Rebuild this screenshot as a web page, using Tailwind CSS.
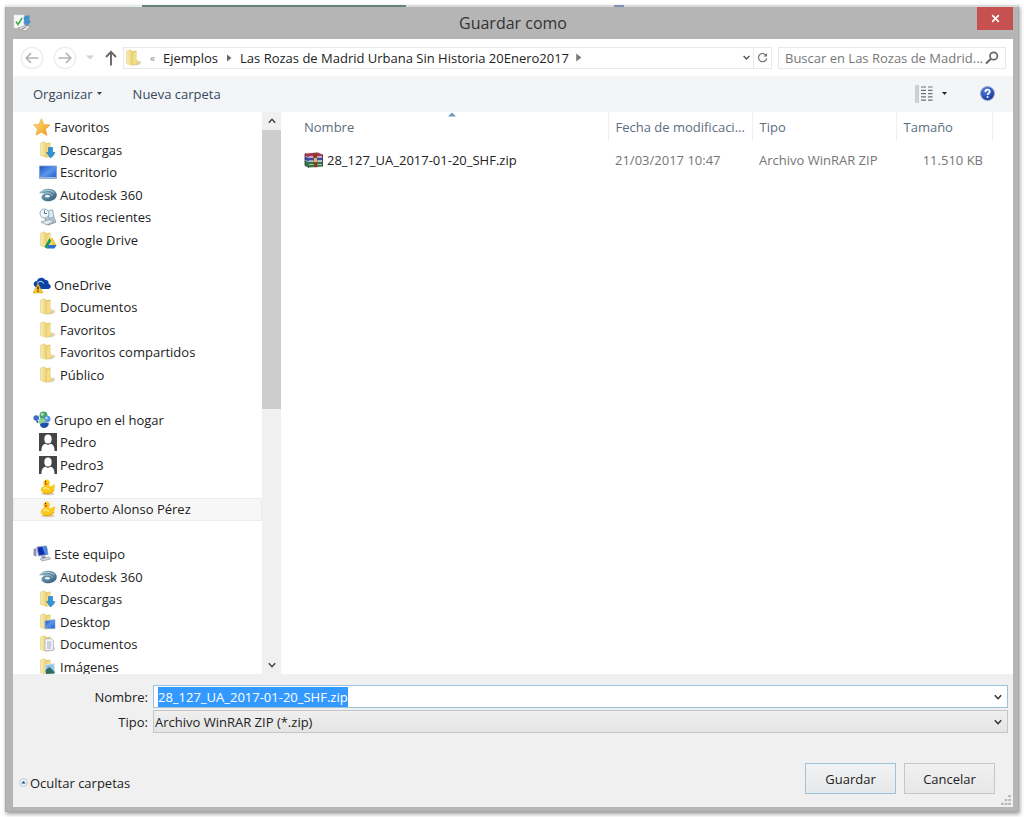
<!DOCTYPE html>
<html lang="es">
<head>
<meta charset="utf-8">
<meta name="viewport" content="width=device-width, initial-scale=1">
<title>Guardar como</title>
<script src="https://cdn.jsdelivr.net/npm/@tailwindcss/browser@4"></script>
</head>
<body class="bg-white font-['Open_Sans','Noto_Sans',sans-serif] text-[13px] leading-5 text-[#333]">
<svg class="absolute size-0" aria-hidden="true">
  <defs>
    <linearGradient id="gf" x1="0" x2="1"><stop offset="0" stop-color="#f9eeb4"/><stop offset="1" stop-color="#e9ce6c"/></linearGradient>
    <linearGradient id="gb" x1="0" y1="0" x2="1" y2="1"><stop offset="0" stop-color="#1c4fc4"/><stop offset=".5" stop-color="#5b95ea"/><stop offset="1" stop-color="#1f5bd0"/></linearGradient>
    <linearGradient id="gs" x1="0" y1="0" x2="1" y2="1"><stop offset="0" stop-color="#ffe680"/><stop offset="1" stop-color="#ee9316"/></linearGradient>
    <linearGradient id="ga" x1="0" y1="0" x2="1" y2="1"><stop offset="0" stop-color="#8fb9cc"/><stop offset="1" stop-color="#2f5878"/></linearGradient>
    <radialGradient id="gh" cx=".4" cy=".3" r=".8"><stop offset="0" stop-color="#5b86e6"/><stop offset="1" stop-color="#0a2590"/></radialGradient>
    <symbol id="folder" viewBox="0 0 18 18">
      <path d="M10 14l5-2.500 1.500 2.500-3 2.200-5 .3z" fill="#c4c8cc" opacity=".7"/>
      <path d="M6 2.500L11.500 1.500V11L14 12.500 13.500 15 7 16.500z" fill="#e6cb6d"/>
      <path d="M1.500 2L5.500.800 7.500 2.500 8 16.500 1.500 14.500z" fill="url(#gf)" stroke="#e2cd80" stroke-width=".6"/>
      <path d="M8 4l3-1v8.500l2.500 1.500L8 16z" fill="#f3dd88"/>
    </symbol>
    <symbol id="down" viewBox="0 0 18 18"><use href="#folder"/><path d="M9.500 6.500h4v5h2.500l-4.300 5.500L7.500 11.500h2z" fill="#2d93dc" stroke="#1a6fb5" stroke-width=".6"/></symbol>
    <symbol id="desk" viewBox="0 0 18 18"><path d="M.500 3h17v12.500H.500z" fill="url(#gb)" stroke="#7d9ccb" stroke-width=".8"/><path d="M.500 14h17v1.500H.500z" fill="#9fb7cf"/></symbol>
    <symbol id="auto" viewBox="0 0 18 18"><path d="M0 7.500C2 4 6 2.500 9.500 2.700c4.500.200 8.300 2.600 8.300 6.100 0 4-4 6.500-9 6.500-3.800 0-6.300-1.700-6.300-4.300C2.500 9.500 4 8 6 7.500 4 7.200 2 7.300 0 7.500z" fill="url(#ga)"/><path d="M2 6.500C5 3.500 12 3.500 15.500 7" fill="none" stroke="#c3dfe9" stroke-width=".8"/><path d="M5.500 7.600C9 6.300 13 7 13.500 9.700" fill="none" stroke="#b4d5e2" stroke-width=".8"/><ellipse cx="8.500" cy="10.200" rx="2.600" ry="1.300" fill="#eef6fa"/></symbol>
    <symbol id="recent" viewBox="0 0 18 18"><path d="M5 8l8-2 4 8-8 3.200z" fill="#b9cdd9" stroke="#6e8799" stroke-width=".8"/><path d="M9 3l4.500-1.200L15 9l-5 1.500z" fill="#dcebf5" stroke="#6f93ad" stroke-width=".7"/><circle cx="5.500" cy="5.500" r="4.500" fill="#f1f6fa" stroke="#93abbb"/><path d="M5.500 2.500v3h2.500" fill="none" stroke="#527b9b"/><path d="M2 14l8-2.500 5 2-7 3.500z" fill="#e3e8eb" stroke="#7f8f9a" stroke-width=".7"/></symbol>
    <symbol id="gdrive" viewBox="0 0 18 18"><use href="#folder"/><path d="M10.500 7l-5 9 2 1.500 5-8z" fill="#159a59"/><path d="M10.500 7h3l4 7h-3.500z" fill="#f7c72f"/><path d="M9.500 14h8l-2 3.500h-8z" fill="#2d6fd0"/></symbol>
    <symbol id="star" viewBox="0 0 18 18"><path d="M8.500.700l2.300 5.700 6.200.6-4.500 4.200 1.500 6.300-5.500-3.300-5.500 3 1.500-6.200L.500 6.800l5.700-.6z" fill="url(#gs)" stroke="#e9a83a" stroke-width=".7"/></symbol>
    <symbol id="onedrive" viewBox="0 0 18 18"><path d="M2.500 11C-.5 9 .5 5 4 5c1-3.500 6-4.500 8-1.200 3 0 4 2.200 3.500 4 3 .7 3 5.200-.5 5.200H6z" fill="#0d43a8"/><path d="M4 7.500C7 4 10 5.500 10.500 7.500" fill="none" stroke="#fff" stroke-width=".9"/><path d="M5 7.500l5 9.500H0z" fill="#f5c52c" stroke="#c99a1a" stroke-width=".5"/><path d="M5 10.500v3M5 14.500v1.200" stroke="#222" stroke-width="1.300"/></symbol>
    <symbol id="home" viewBox="0 0 18 18"><circle cx="3.200" cy="7" r="2.800" fill="#3c6fc4"/><path d="M3 9l3 1.500-2 2z" fill="#2c5cb0"/><circle cx="10.500" cy="4.500" r="4" fill="#45a36c"/><circle cx="9.300" cy="3.300" r="1.600" fill="#a5dcae"/><circle cx="14.300" cy="8" r="3.200" fill="#5b92dd"/><circle cx="13.500" cy="7" r="1.200" fill="#c3ddf7"/><circle cx="9" cy="10.500" r="3.200" fill="#8fd18f"/><path d="M7 13c2-1.500 7-2.500 9-.5-.5 3-3 4.500-5 4.500s-4-1.500-4-4z" fill="#1d50a8"/></symbol>
    <symbol id="user" viewBox="0 0 18 18"><path d="M0 0h18v18H0z" fill="#454545"/><ellipse cx="9" cy="5.900" rx="3.700" ry="4.500" fill="#fff"/><path d="M2.500 18c0-4.500 1.200-6.500 4-7.300L9 12l2.500-1.300c2.800.8 4 2.800 4 7.300z" fill="#fff"/></symbol>
    <symbol id="duck" viewBox="0 0 18 18"><ellipse cx="9" cy="16" rx="7" ry="1.300" fill="#d6d2c0"/><path d="M4.500 4.500C5 .500 10.500.500 10.800 4.500c.1 1.800-.8 2.800-.8 3.800 2 0 3.200-.8 5.700-2.300.5 6-1.500 10-6.700 10-5 0-8-2.500-7-5.500C3 8.500 5 8.500 5 7.500c-.3-1-.8-2-.5-3z" fill="#fbc81e"/><path d="M4 11c2-2 5-1 6 .5" fill="none" stroke="#fde77c" stroke-width="1.500"/><path d="M4.500 15c4 1.500 9 .5 10.500-3" fill="none" stroke="#e59a10"/><path d="M5.500 4.500l3 1.300-1.800 1.500z" fill="#cf3d16"/><circle cx="6.500" cy="3.500" r=".7" fill="#4a2c05"/></symbol>
    <symbol id="pc" viewBox="0 0 18 18"><path d="M.500 4l3-1v8.500l-3-1z" fill="#8b93b5"/><path d="M4 2l9.500-1L15 9.500 5.500 11z" fill="#102fae" stroke="#9aa3bd"/><path d="M9 1.500l4-.3 1.500 8-2.500.3z" fill="#4c8ae8"/><path d="M8 11.500l4-.5 1 2-4 .8z" fill="#888fa2"/><path d="M7 14l9-2 1.500 2-8.500 2z" fill="#d2d6de" stroke="#858c9a" stroke-width=".6"/></symbol>
    <symbol id="fdesk" viewBox="0 0 18 18"><use href="#folder"/><path d="M6 8l10-1.500v9L6 15.500z" fill="url(#gb)" stroke="#84a6cc" stroke-width=".6"/></symbol>
    <symbol id="fdoc" viewBox="0 0 18 18"><use href="#folder"/><path d="M6 4l6-.5 2.500 2v9.500l-8.500.8z" fill="#f2f4f8" stroke="#a5abb8" stroke-width=".7"/><path d="M8 7h4M8 9h4.500M8 11h4.500M8 13h4" stroke="#8c9dc4" stroke-width=".8"/></symbol>
    <symbol id="fimg" viewBox="0 0 18 18"><use href="#folder"/><path d="M6 7l9-1.500 1 9.500-9 1z" fill="#8fc6e6" stroke="#dfe5e8" stroke-width=".8"/><path d="M6.500 12l4-3 5 5v1.500l-8.500.5z" fill="#2c6b62"/></symbol>
    <symbol id="chev" viewBox="0 0 10 10"><path d="M1.800 3.300L5 6.700 8.200 3.300" fill="none" stroke="currentColor" stroke-width="1.500"/></symbol>
    <symbol id="tri" viewBox="0 0 8 8"><path d="M2 .500L6.500 4 2 7.500z" fill="currentColor"/></symbol>
    <symbol id="back" viewBox="0 0 24 24"><circle cx="12" cy="12" r="10.700" fill="none" stroke="#ebebeb" stroke-width="1.200"/><path d="M18.500 12H6.500M11 7.200L6.200 12l4.800 4.800" fill="none" stroke="#b4b4b4" stroke-width="1.700"/></symbol>
  </defs>
</svg>

<div class="flex h-screen min-h-[560px] p-[5px]">
<main class="flex min-w-0 flex-1 flex-col border border-[#aaa] bg-[#b5b5b5] pr-[5px] pb-[4px] pl-[7px] shadow-[1px_2px_4px_rgba(0,0,0,0.4)]">
  <div class="-mt-px -mr-[6px] -ml-2 flex h-[2px] shrink-0 bg-[#d8dbda]" aria-hidden="true">
    <span class="w-[137px] bg-[#e6ebe8]"></span><span class="w-[264px] bg-[#648480]"></span><span class="w-[208px]"></span><span class="w-[10px] bg-[#7b91bb]"></span>
  </div>
  <header class="grid h-8 shrink-0 grid-cols-[1fr_auto_1fr] items-center">
    <svg class="h-[18px] w-5" viewBox="0 0 20 18" aria-hidden="true"><path d="M1 1h10v13H1z" fill="#fafafa" stroke="#ddd" stroke-width=".6"/><path d="M3 7.500l2 3L9 4" fill="none" stroke="#3fae49" stroke-width="1.500"/><path d="M10.500 3.500L13 1.500h3.500v5.500h1.800L14 12.500 10 8h1.500z" fill="#3f90cd"/><path d="M5 14l7-2.500 6 1-6 4.500z" fill="#e9e9ea" stroke="#8a8a8a" stroke-width=".6"/><path d="M9 15l4-2" stroke="#777"/></svg>
    <h1 class="text-base leading-6 text-[#333]">Guardar como</h1>
    <button class="grid h-[23px] w-9 place-items-center self-start justify-self-end bg-[#c75050]" aria-label="Cerrar"><svg class="size-[9px]" viewBox="0 0 10 10"><path d="M1.300 1.300l7.400 7.400M8.700 1.300L1.300 8.700" stroke="#fff" stroke-width="1.800"/></svg></button>
  </header>

  <section class="flex min-h-0 flex-1 flex-col bg-white">
    <nav class="flex h-[37px] shrink-0 items-center pr-[7px] pl-[7px]" aria-label="Ubicación">
      <button class="size-6" aria-label="Atrás"><svg class="size-6"><use href="#back"/></svg></button>
      <button class="ml-[9px] size-6 rotate-180" aria-label="Adelante"><svg class="size-6"><use href="#back"/></svg></button>
      <button class="ml-[7px] grid h-6 w-3 place-items-center" aria-label="Ubicaciones recientes"><svg class="h-[5px] w-2" viewBox="0 0 8 5"><path d="M0 .500h8l-4 4z" fill="#d2d2d2"/></svg></button>
      <button class="ml-[7px] grid h-6 w-4 place-items-center" aria-label="Arriba"><svg class="h-4 w-3" viewBox="0 0 12 16"><path d="M6 15.500V2M1 7l5-5.200L11 7" fill="none" stroke="#666" stroke-width="1.900"/></svg></button>
      <div class="ml-1 flex h-[22px] min-w-0 flex-1 items-center border border-[#e9e9e9] text-[#222]">
        <svg class="ml-px size-[18px] shrink-0" aria-hidden="true"><use href="#folder"/></svg>
        <span class="ml-[7px] text-[10px] text-[#888]">«</span>
        <a href="#" class="ml-2">Ejemplos</a>
        <svg class="mx-[7px] size-[8px] shrink-0 text-[#666]"><use href="#tri"/></svg>
        <a href="#" class="truncate">Las Rozas de Madrid Urbana Sin Historia 20Enero2017</a>
        <svg class="ml-[5px] size-[9px] shrink-0 text-[#777]"><use href="#tri"/></svg>
        <button class="ml-auto grid h-5 w-[14px] place-items-center text-[#555]" aria-label="Ubicaciones anteriores"><svg class="size-[9px]"><use href="#chev"/></svg></button>
        <button class="grid h-5 w-[18px] shrink-0 place-items-center border-l border-[#e9e9e9]" aria-label="Actualizar"><svg class="size-[11px]" viewBox="0 0 12 12"><path d="M10.300 4.300A4.500 4.500 0 1 0 10.600 7" fill="none" stroke="#777" stroke-width="1.300"/><path d="M11 1v4H7z" fill="#777"/></svg></button>
      </div>
      <label class="ml-[6px] flex h-[22px] w-[228px] items-center border border-[#e9e9e9] pr-[6px] pl-[6px]">
        <input type="text" aria-label="Buscar" placeholder="Buscar en Las Rozas de Madrid..." class="min-w-0 flex-1 outline-none placeholder:text-[#777]">
        <svg class="size-[14px]" viewBox="0 0 14 14" aria-hidden="true"><circle cx="8.700" cy="5" r="3.700" fill="none" stroke="#666" stroke-width="1.700"/><path d="M6 7.700L1 12.500" stroke="#666" stroke-width="2"/></svg>
      </label>
    </nav>

    <div class="flex h-[36px] shrink-0 items-center bg-[#f4f5f7] pr-[18px] pb-px pl-5 text-[#34485c]" role="toolbar">
      <button class="flex items-center gap-1">Organizar <svg class="h-[3px] w-[5px]" viewBox="0 0 5 3"><path d="M0 0h5L2.500 3z" fill="#34485c"/></svg></button>
      <button class="ml-[31px]">Nueva carpeta</button>
      <button class="ml-auto" aria-label="Vista"><svg class="h-[18px] w-[18px]" viewBox="0 0 18 18"><path d="M.500.500h3v17h-3z" fill="#cdd2d6" stroke="#b6bcc0" stroke-width=".6"/><path d="M6 2h5M13 2h4.500M6 5.300h5M13 5.300h4.500M6 8.600h5M13 8.600h4.500M6 11.900h5M13 11.900h4.500M6 15.200h5M13 15.200h4.500" stroke="#68727c" stroke-width="1.200"/></svg></button>
      <button class="ml-[5px] grid h-5 w-3 place-items-center" aria-label="Más opciones"><svg class="h-[3px] w-[5px]" viewBox="0 0 5 3"><path d="M0 0h5L2.500 3z" fill="#222"/></svg></button>
      <button class="ml-[30px] grid size-[15px] place-items-center" aria-label="Ayuda"><svg class="size-[15px]" viewBox="0 0 15 15"><circle cx="7.500" cy="7.500" r="6.900" fill="url(#gh)" stroke="#8fa3cf"/><path d="M5.300 5.900c0-3 4.500-3 4.500-.3 0 1.700-2.200 1.600-2.200 3.400M7.600 10.200v1.700" fill="none" stroke="#fff" stroke-width="1.700"/></svg></button>
    </div>

    <div class="flex min-h-0 flex-1">
      <aside class="flex w-[268px] shrink-0">
        <div class="min-w-0 flex-1 overflow-hidden text-[#222]">
          <ul class="mt-1 flex h-full flex-col *:flex *:min-h-0 *:flex-1 *:items-center *:gap-[3px] *:border *:border-transparent *:pl-[25px] [&_svg]:size-[18px] [&_svg]:shrink-0">
            <li class="-ml-[6px]"><svg><use href="#star"/></svg>Favoritos</li>
            <li><svg><use href="#down"/></svg>Descargas</li>
            <li><svg><use href="#desk"/></svg>Escritorio</li>
            <li><svg><use href="#auto"/></svg>Autodesk 360</li>
            <li><svg><use href="#recent"/></svg>Sitios recientes</li>
            <li><svg><use href="#gdrive"/></svg>Google Drive</li>
            <li aria-hidden="true"></li>
            <li class="-ml-[6px]"><svg><use href="#onedrive"/></svg>OneDrive</li>
            <li><svg><use href="#folder"/></svg>Documentos</li>
            <li><svg><use href="#folder"/></svg>Favoritos</li>
            <li><svg><use href="#folder"/></svg>Favoritos compartidos</li>
            <li><svg><use href="#folder"/></svg>Público</li>
            <li aria-hidden="true"></li>
            <li class="-ml-[6px]"><svg><use href="#home"/></svg>Grupo en el hogar</li>
            <li><svg><use href="#user"/></svg>Pedro</li>
            <li><svg><use href="#user"/></svg>Pedro3</li>
            <li><svg><use href="#duck"/></svg>Pedro7</li>
            <li class="border-[#ececec]! bg-[#f7f7f7]"><svg><use href="#duck"/></svg>Roberto Alonso Pérez</li>
            <li aria-hidden="true"></li>
            <li class="-ml-[6px]"><svg><use href="#pc"/></svg>Este equipo</li>
            <li><svg><use href="#auto"/></svg>Autodesk 360</li>
            <li><svg><use href="#down"/></svg>Descargas</li>
            <li><svg><use href="#fdesk"/></svg>Desktop</li>
            <li><svg><use href="#fdoc"/></svg>Documentos</li>
            <li><svg><use href="#fimg"/></svg>Imágenes</li>
          </ul>
        </div>
        <div class="flex w-[19px] shrink-0 flex-col bg-[#f0f0f0] text-[#444]">
          <button class="grid h-[18px] shrink-0 place-items-center" aria-label="Subir"><svg class="size-[10px] rotate-180"><use href="#chev"/></svg></button>
          <div class="min-h-0 flex-1"><div class="h-[53%] bg-[#cdcdcd]"></div></div>
          <button class="grid h-[18px] shrink-0 place-items-center" aria-label="Bajar"><svg class="size-[10px]"><use href="#chev"/></svg></button>
        </div>
      </aside>

      <div class="min-w-0 flex-1">
        <table class="w-full table-fixed border-collapse text-left text-[#757575]">
          <colgroup><col><col class="w-36"><col class="w-36"><col class="w-24"><col class="w-[21px]"></colgroup>
          <thead class="text-[#5b6e80]">
            <tr class="h-[29px] *:border-r *:border-[#f0f0f0] *:font-normal">
              <th class="relative pl-[23px]">Nombre<svg class="absolute top-0 left-1/2 ml-1 h-[5px] w-2" viewBox="0 0 8 5"><path d="M0 4.500L4 .500l4 4z" fill="#6a9ab5"/></svg></th>
              <th class="truncate pl-[7px]">Fecha de modificaci...</th>
              <th class="pl-[7px]">Tipo</th>
              <th class="pl-[7px]">Tamaño</th>
              <td class="border-r-0!"></td>
            </tr>
          </thead>
          <tbody>
            <tr class="h-[38px]">
              <td class="pl-[23px] text-[#222]"><div class="flex items-center gap-1"><svg class="h-4 w-[19px]" viewBox="0 0 19 16"><path d="M1 1.500L14 .500l4.500 2V5L5 5.500 1 4z" fill="#a83a58"/><path d="M1 4.500l4 1.500 13.500-.5v3L5 9.500 1 8z" fill="#3a4aa5"/><path d="M1 8.500L5 10l13.500-.5v5L5 15.500 1 13z" fill="#2f7a44"/><path d="M5 4.500h13.500M5 8.700h13.500M5 12.500h13.500" stroke="#e4dede" stroke-width=".7"/><path d="M9 1l4-.3.500 14.500H10z" fill="#8c3b28"/><path d="M10 6h3v4h-3z" fill="#d9b878"/><path d="M1 1.500v12L5 15.500M18.500 2.500v12" fill="none" stroke="#33203a" stroke-width=".8"/></svg>28_127_UA_2017-01-20_SHF.zip</div></td>
              <td class="pl-[7px]">21/03/2017 10:47</td>
              <td class="pl-[7px]">Archivo WinRAR ZIP</td>
              <td class="pr-[9px] text-right">11.510 KB</td>
              <td></td>
            </tr>
          </tbody>
        </table>
      </div>
    </div>

    <form class="flex h-[133px] shrink-0 flex-col bg-[#f0f0f0] pt-[11px] text-[#222]" onsubmit="return false">
      <div class="grid grid-cols-[135px_1fr] gap-x-[5px] gap-y-[2px] pr-[5px]">
        <label for="name" class="self-center text-right">Nombre:</label>
        <div class="flex h-[23px] items-center border border-[#9cc3dd] bg-white px-1">
          <input id="name" type="text" value="28_127_UA_2017-01-20_SHF.zip" class="min-w-0 flex-1 outline-none selection:bg-[#3399ff] selection:text-white">
          <svg class="size-[10px] text-[#333]" aria-hidden="true"><use href="#chev"/></svg>
        </div>
        <label for="type" class="self-center text-right">Tipo:</label>
        <div class="grid h-[23px] items-center border border-[#c4c6c8] bg-linear-to-b from-[#efefef] to-[#e5e5e5] *:col-start-1 *:row-start-1">
          <select id="type" class="w-full appearance-none pl-px outline-none"><option>Archivo WinRAR ZIP (*.zip)</option></select>
          <svg class="pointer-events-none mr-1 size-[10px] justify-self-end text-[#333]" aria-hidden="true"><use href="#chev"/></svg>
        </div>
      </div>
      <div class="mt-auto mb-[13px] flex items-center gap-2 pr-[18px] pl-[6px]">
        <button type="button" class="mt-2 mr-auto flex items-center gap-[2px]"><svg class="size-[9px]" viewBox="0 0 9 9"><circle cx="4.500" cy="4.500" r="4" fill="#e3edf5" stroke="#b9cad8" stroke-width=".8"/><path d="M2.500 5.500l2-2.500 2 2.500z" fill="#24486b"/></svg>Ocultar carpetas</button>
        <button class="h-[31px] w-[91px] border border-[#9cc3dd] bg-linear-to-b from-[#f0f2f3] to-[#e6e8e9]">Guardar</button>
        <button type="button" class="h-[31px] w-[91px] border border-[#c4c6c8] bg-linear-to-b from-[#f1f1f1] to-[#e7e7e7]">Cancelar</button>
      </div>
      <svg class="-mt-3 mr-[2px] mb-[2px] size-[10px] shrink-0 self-end" viewBox="0 0 9 9" aria-hidden="true"><path d="M6.500 0H9v2H6.500zM3.300 3.500h2.500v2H3.300zM6.500 3.500H9v2H6.500zM0 7h2.500v2H0zM3.300 7h2.500v2H3.300zM6.500 7H9v2H6.500z" fill="#b9b9b9"/></svg>
    </form>
  </section>
</main>
</div>
<script>
  const nameField = document.getElementById('name');
  nameField.focus();
  nameField.select();
</script>
</body>
</html>
